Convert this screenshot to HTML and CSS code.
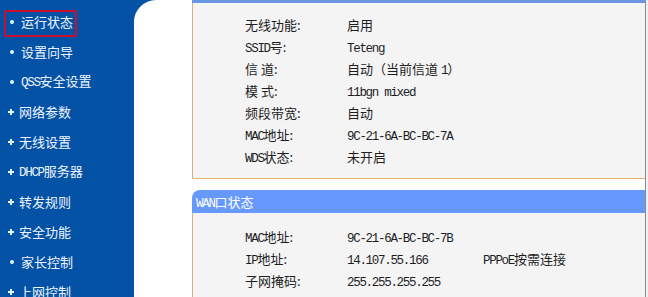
FILE: index.html
```html
<!DOCTYPE html>
<html lang="zh-CN">
<head>
<meta charset="utf-8">
<title>运行状态</title>
<link rel="stylesheet" href="styles.css">
</head>
<body>
<div class="layout">
  <nav class="sidebar">
    <div class="nav-item active"><i class="dot"></i><span class="nav-text">运行状态</span></div>
    <div class="nav-item"><i class="dot"></i><span class="nav-text">设置向导</span></div>
    <div class="nav-item"><i class="dot"></i><span class="nav-text"><span class="en">QSS</span>安全设置</span></div>
    <div class="nav-item"><i class="plus"></i><span class="nav-text">网络参数</span></div>
    <div class="nav-item"><i class="plus"></i><span class="nav-text">无线设置</span></div>
    <div class="nav-item"><i class="plus"></i><span class="nav-text"><span class="en">DHCP</span>服务器</span></div>
    <div class="nav-item"><i class="plus"></i><span class="nav-text">转发规则</span></div>
    <div class="nav-item"><i class="plus"></i><span class="nav-text">安全功能</span></div>
    <div class="nav-item"><i class="dot"></i><span class="nav-text">家长控制</span></div>
    <div class="nav-item"><i class="plus"></i><span class="nav-text">上网控制</span></div>
  </nav>
  <main class="main">
    <div class="content">
      <section class="panel">
        <div class="bar"></div>
        <div class="panel-body first">
          <div class="row"><span class="label">无线功能:</span><span class="value">启用</span></div>
          <div class="row"><span class="label"><span class="en">SSID</span>号:</span><span class="value"><span class="en">Teteng</span></span></div>
          <div class="row"><span class="label">信 道:</span><span class="value">自动（当前信道 <span class="en">1</span>）</span></div>
          <div class="row"><span class="label">模 式:</span><span class="value"><span class="en">11bgn mixed</span></span></div>
          <div class="row"><span class="label">频段带宽:</span><span class="value">自动</span></div>
          <div class="row"><span class="label"><span class="en">MAC</span>地址:</span><span class="value"><span class="en">9C-21-6A-BC-BC-7A</span></span></div>
          <div class="row"><span class="label"><span class="en">WDS</span>状态:</span><span class="value">未开启</span></div>
        </div>
      </section>
      <section class="panel second">
        <div class="panel-head"><span class="en">WAN</span>口状态</div>
        <div class="panel-body">
          <div class="row"><span class="label"><span class="en">MAC</span>地址:</span><span class="value"><span class="en">9C-21-6A-BC-BC-7B</span></span></div>
          <div class="row"><span class="label"><span class="en">IP</span>地址:</span><span class="value"><span class="en">14.107.55.166</span></span><span class="extra"><span class="en">PPPoE</span>按需连接</span></div>
          <div class="row"><span class="label">子网掩码:</span><span class="value"><span class="en">255.255.255.255</span></span></div>
          <div class="row"><span class="label">网关:</span><span class="value"><span class="en">14.107.55.1</span></span></div>
        </div>
      </section>
    </div>
    <div class="edge"></div>
  </main>
</div>
</body>
</html>
```

FILE: styles.css
```css
html, body {
  margin: 0;
  padding: 0;
}
body {
  width: 648px;
  height: 297px;
  overflow: hidden;
  background: #0452a5;
  font-family: "Noto Sans CJK SC", "Liberation Sans", sans-serif;
  font-size: 13px;
}
.en {
  font-family: "Liberation Mono", "Noto Sans CJK SC", monospace;
  font-size: 12.5px;
  letter-spacing: -1.3px;
}
.layout {
  display: flex;
  height: 297px;
}
.sidebar {
  width: 134px;
  flex: none;
  padding-top: 7px;
  color: #eef4ff;
}
.nav-item {
  position: relative;
  height: 30px;
  display: flex;
  align-items: center;
  padding-left: 8px;
}
.nav-text {
  line-height: 16px;
  white-space: nowrap;
}
.nav-item.active::after {
  content: "";
  position: absolute;
  left: 4px;
  top: 3px;
  width: 69px;
  height: 23px;
  border: 2px solid #c8102e;
  border-radius: 2px;
}
.dot {
  width: 4px;
  height: 4px;
  border-radius: 50%;
  background: #e4f4ea;
  margin: 0 7px 0 2px;
  flex: none;
}
.plus {
  position: relative;
  width: 6px;
  height: 6px;
  margin-right: 5px;
  flex: none;
}
.plus::before, .plus::after {
  content: "";
  position: absolute;
  background: #e4f4ea;
}
.plus::before {
  left: 0;
  top: 2px;
  width: 6px;
  height: 2px;
}
.plus::after {
  left: 2px;
  top: 0;
  width: 2px;
  height: 6px;
}
.main {
  flex: 1;
  display: flex;
  background: #ffffff;
  border-top-left-radius: 22px;
  padding-left: 58px;
}
.content {
  width: 453px;
  flex: none;
}
.edge {
  flex: 1;
  background: #f1f1f1;
  border-left: 1px solid #8a8a8a;
}
.bar {
  height: 3px;
  background: #6a97e4;
}
.panel-body {
  background: #f4f4f5;
  border-left: 1px solid #d3b27e;
  padding: 12px 0 0 52px;
  color: #1e1e1e;
}
.panel-body.first {
  padding: 10px 0 11px 52px;
  border-bottom: 1px solid #e6b070;
}
.panel.second {
  margin-top: 11px;
}
.panel-head {
  height: 23px;
  line-height: 23px;
  background: #6699fb;
  border-top-left-radius: 8px;
  color: #ffffff;
  padding-left: 4px;
}
.row {
  display: flex;
  align-items: center;
  height: 22px;
  white-space: nowrap;
}
.label {
  width: 102px;
  flex: none;
}
.value {
  width: 136px;
  flex: none;
}
```
